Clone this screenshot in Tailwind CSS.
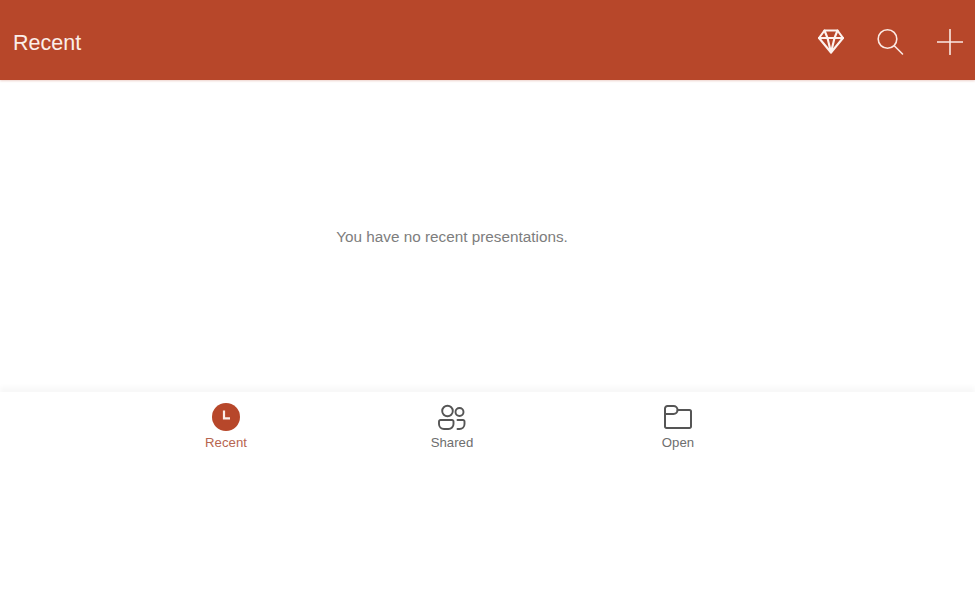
<!doctype html>
<html>
<head>
<meta charset="utf-8">
<script src="https://cdn.jsdelivr.net/npm/@tailwindcss/browser@4"></script>
</head>
<body class="bg-white font-['Liberation_Sans',sans-serif]">
<div class="w-[975px] h-[600px] flex flex-col overflow-hidden">
  <header class="h-[80px] shrink-0 bg-[#b7472a] flex items-center pl-[13px] pr-[12px] text-white shadow-[0_1px_2px_rgba(183,71,42,0.25)]">
    <h1 class="text-[21.500px] leading-none flex-1 pt-[8px] font-normal text-[#fbeee9]">Recent</h1>
    <div class="flex items-center gap-[32px] pt-[3px]">
      <svg width="28" height="26" viewBox="0 0 28 26" fill="none" stroke="#fdf3ef" stroke-width="2.100" stroke-linejoin="round" stroke-linecap="round"><path d="M7.500 1.500h13L26 9 14 23.500 2 9Z"/><path d="M2 9h24M7.500 1.500 10.500 9 14 23.500 17.500 9 20.500 1.500"/></svg>
      <svg width="28" height="28" viewBox="0 0 28 28" fill="none" stroke="#fbe9e3" stroke-width="1.600" stroke-linecap="round"><circle cx="10.500" cy="11" r="9.300"/><path d="M17.500 18 25.500 26"/></svg>
      <svg width="26" height="26" viewBox="0 0 26 26" fill="none" stroke="#fbe9e3" stroke-width="1.600" stroke-linecap="round"><path d="M13 .5v25M.5 13h25"/></svg>
    </div>
  </header>
  <main class="h-[312px] shrink-0 flex items-center justify-center">
    <p class="text-[15.300px] leading-none text-[#7d7d7d] mr-[71px] mt-[2px]">You have no recent presentations.</p>
  </main>
  <nav class="flex-1 pt-[11px] pl-[113px] shadow-[0_-5px_5px_rgba(0,0,0,0.03)] grid grid-cols-[226px_226px_226px] content-start text-[13.200px] leading-none">
    <div class="flex flex-col items-center gap-[5px] text-[#b7654f]">
      <svg width="28" height="28" viewBox="0 0 28 28"><circle cx="14" cy="14" r="14" fill="#b7472a"/><path d="M12 7.500v7.800h6" fill="none" stroke="#fbeee9" stroke-width="2.200"/></svg>
      <span>Recent</span>
    </div>
    <div class="flex flex-col items-center gap-[5px] text-[#6e6e6e]">
      <svg width="28" height="28" viewBox="0 0 28 28" fill="none" stroke="#555" stroke-width="1.900" stroke-linecap="round"><circle cx="9.500" cy="8" r="5.300"/><circle cx="21.500" cy="9" r="4"/><path d="M2.500 17H14a1.500 1.500 0 0 1 1.500 1.500V21a5 5 0 0 1-5 5H6a5 5 0 0 1-5-5v-2.500A1.500 1.500 0 0 1 2.500 17Z" stroke-linejoin="round"/><path d="M19.500 17h5.500a1.500 1.500 0 0 1 1.500 1.500V21a5 5 0 0 1-5 5h-2"/></svg>
      <span>Shared</span>
    </div>
    <div class="flex flex-col items-center gap-[5px] text-[#6e6e6e]">
      <svg width="28" height="28" viewBox="0 0 28 28" fill="none" stroke="#555" stroke-width="2" stroke-linejoin="round"><path d="M1 5.500a2.500 2.500 0 0 1 2.500-2.500h6a4 4 0 0 1 4 4h12a1.500 1.500 0 0 1 1.500 1.500V23.500a1.500 1.500 0 0 1-1.500 1.500H2.500A1.500 1.500 0 0 1 1 23.500Z"/><path d="M1 11h8.500a4 4 0 0 0 4-4"/></svg>
      <span>Open</span>
    </div>
  </nav>
</div>
</body>
</html>
